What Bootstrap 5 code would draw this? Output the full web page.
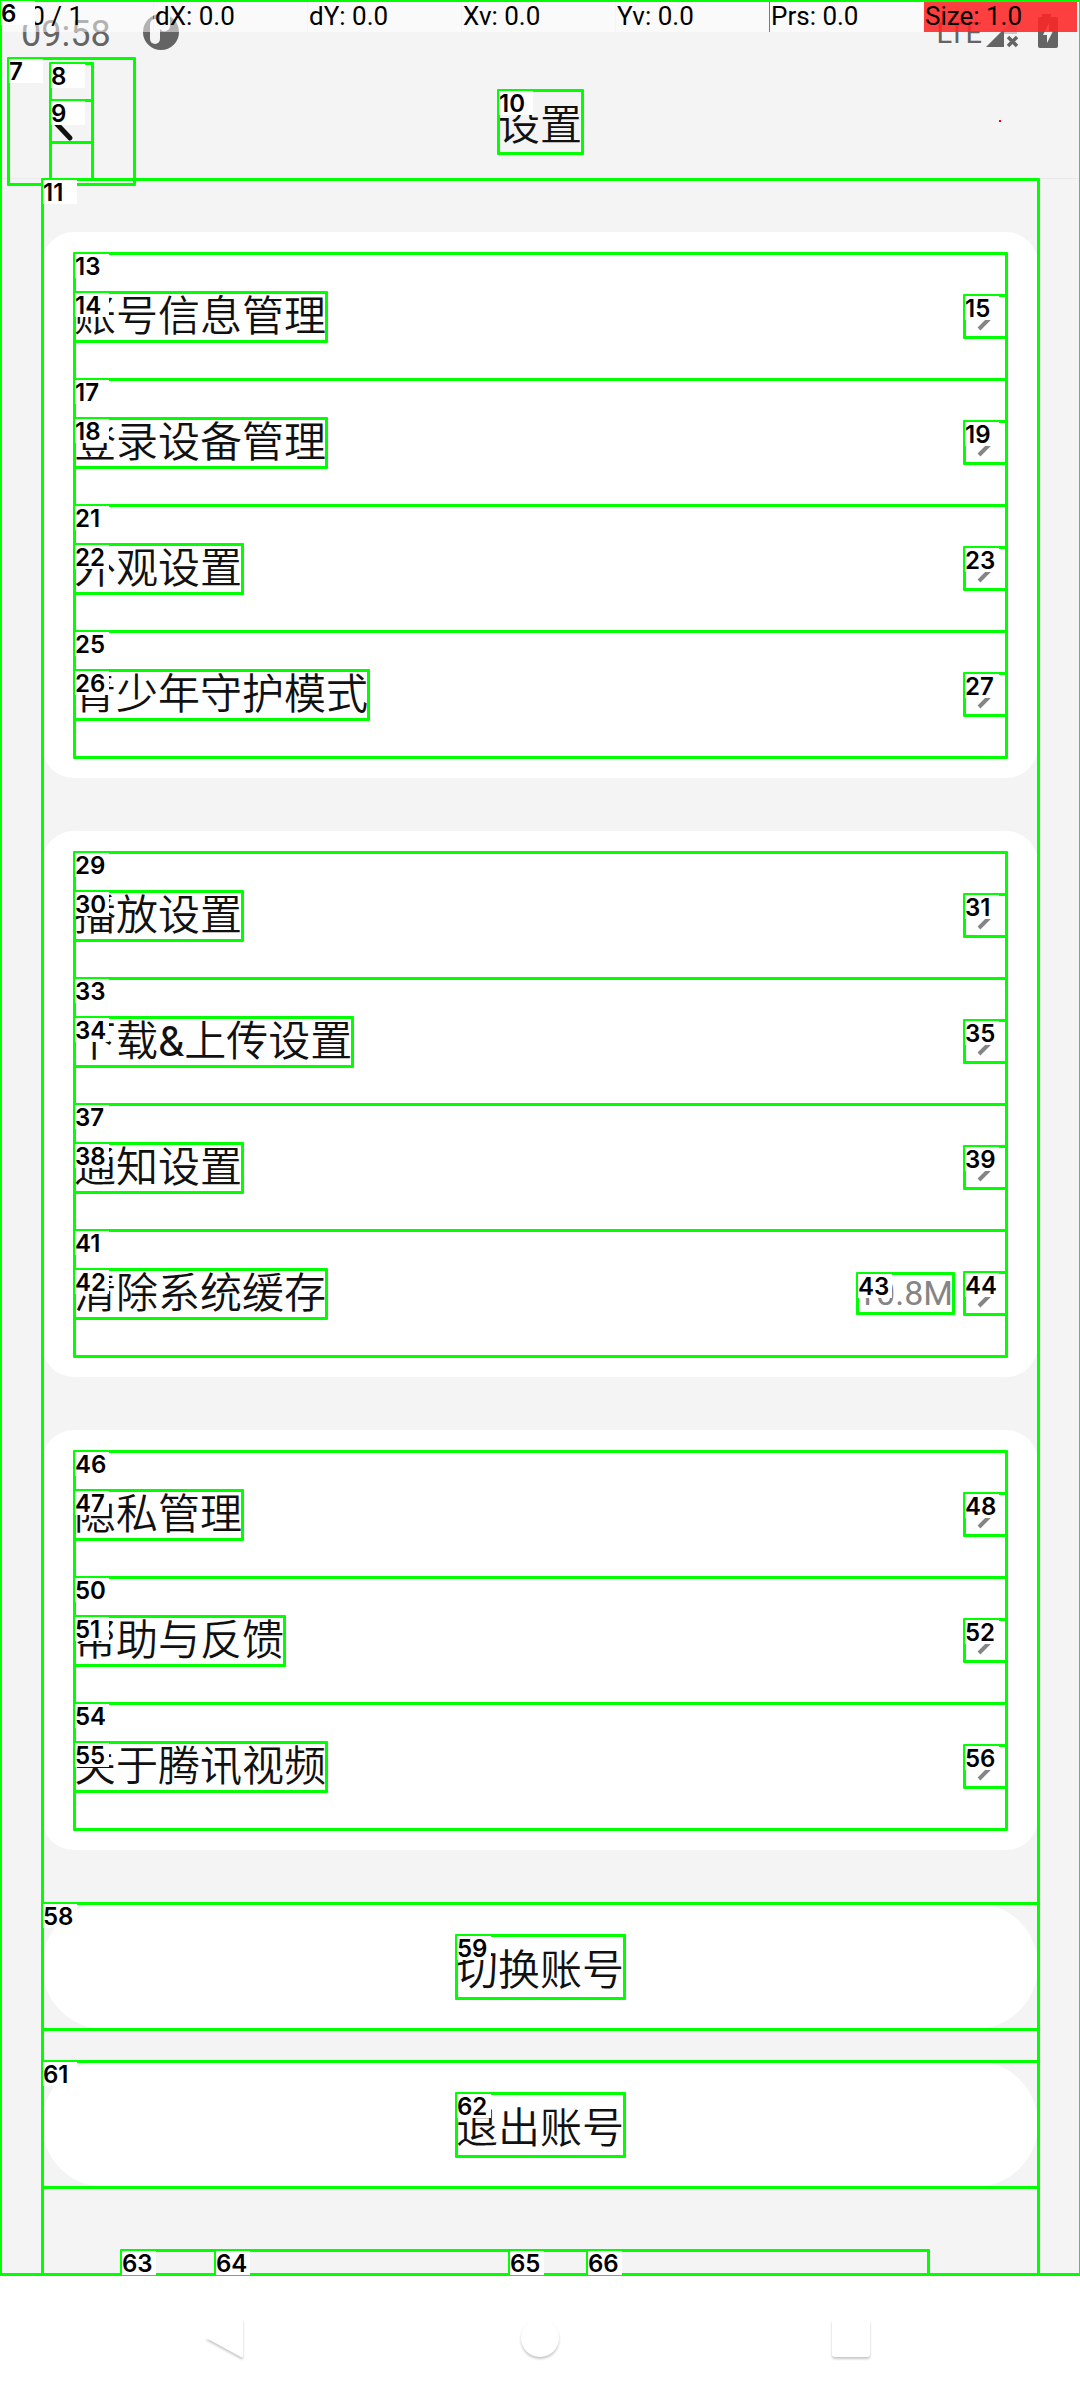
<!DOCTYPE html>
<html lang="zh-CN">
<head>
<meta charset="utf-8">
<meta name="viewport" content="width=device-width, initial-scale=1">
<title>设置</title>
<link rel="stylesheet" href="https://cdn.jsdelivr.net/npm/bootstrap@5.3.0/dist/css/bootstrap.min.css">
<style>
  body { background: #fff; color: #111; font-family: Roboto, "Noto Sans CJK SC", sans-serif; font-size: 42px; line-height: 49px; overflow-x: hidden; }
  a, a:hover { color: inherit; text-decoration: none; }
  svg { display: block; flex: none; }

  /* inspector outline and its index label */
  .node { position: relative; }
  .node::before { content: ""; position: absolute; inset: -1px -2px -2px -1px; border: 3px solid #0f0; border-radius: 1px; pointer-events: none; }
  .tag { position: absolute; left: 1px; top: 1px; z-index: 2; width: 34px; height: 24px; background: #fff; color: #000; font: 600 24px/25px Inter, sans-serif; text-align: left; }

  .screen { background: #f4f4f4; overflow: hidden; padding-bottom: 2px; }
  .screen > .frame { position: absolute; inset: 0 0 2px 0; z-index: 1; pointer-events: none; }
  .status { height: 58px; padding: 0 20px 0 21px; color: #646464; }
  .clock { font-size: 36px; line-height: 68px; }
  .net { font-size: 29px; line-height: 66px; margin-right: 2px; }
  .pointer { position: absolute; inset: 0 0 auto 0; display: grid; grid-template-columns: repeat(7, 1fr); gap: 1px; padding-right: 3px; color: #000; font-size: 26px; line-height: 33px; white-space: pre; }
  .pointer > span { background: rgba(255,255,255,.5); padding-left: 1px; height: 32px; }
  .pointer > .edge { box-shadow: -1px 0 #ff4040; }
  .pointer > .hot { background: linear-gradient(rgba(255,0,0,.75), rgba(255,0,0,.75)), rgba(255,255,255,.5); }
  .touch { position: absolute; left: 999px; top: 120px; width: 2px; height: 2px; background: #f00; }

  .toolbar { height: 121px; padding: 6px 8px 0; border-bottom: 1px solid #e9e9e9; }
  .back { width: 126px; height: 126px; padding: 0 0 0 42px; border: 0; background: none; }
  .back-in { width: 42px; height: 116px; }
  .heading { font-size: 42px; line-height: 55px; padding-top: 8px; margin: 0; font-weight: 400; }
  .side { flex: 1 1 0; }

  .content-area { margin: 0 42px; padding-top: 53px; }
  .panel { background: #fff; border-radius: 32px; padding: 21px 32px; margin-bottom: 53px; }
  .item { height: 126px; }
  .item, .heading, .pill { font-weight: 350; }
  .size { font-size: 34px; line-height: 40px; color: #858585; font-weight: 400; margin-right: 11px; }
  .pill { height: 126px; border: 0; border-radius: 63px; background: #fff; color: #111; margin-bottom: 32px; padding: 0; }
  .pill-text { line-height: 55px; padding-top: 8px; }
  .legal { height: 24px; margin: 63px 110px 0 79px; }
  .w-a { flex: 94; } .w-b { flex: 294; } .w-c { flex: 78; } .w-d { flex: 341; }
  .navkeys { height: 124px; gap: 272px; }
  .navkeys button { border: 0; padding: 0; background: none; }
  .navkeys svg { overflow: visible; filter: drop-shadow(0 2px 1px rgba(0,0,0,.22)); }
</style>
<script src="https://cdn.jsdelivr.net/npm/bootstrap@5.3.0/dist/js/bootstrap.bundle.min.js"></script>
</head>
<body>
<svg width="0" height="0" class="position-absolute" aria-hidden="true">
  <symbol id="go" viewBox="0 0 42 42"><path d="M15 34L28 21L15 8" fill="none" stroke="#858585" stroke-width="4"/></symbol>
</svg>

<div class="screen position-relative">
  <div class="node frame"><span class="tag">6</span></div>

  <header>
    <div class="status d-flex align-items-start">
      <span class="clock">09:58</span>
      <svg class="ms-4" width="50" height="58" viewBox="0 0 50 58" aria-hidden="true"><circle cx="26" cy="32" r="18" fill="#646464"/><rect x="15" y="19" width="10" height="25" rx="5" fill="#f4f4f4"/><path d="M25 14h10v12a5.500 5.500 0 0 1-10 3z" fill="#f4f4f4"/></svg>
      <span class="net ms-auto">LTE</span>
      <svg width="76" height="58" viewBox="0 0 76 58" aria-hidden="true"><path d="M2 47L20 29V47z" fill="#646464"/><path d="M20 29L33 16V34H20z" fill="#646464" opacity=".3"/><path d="M24 37l9 9M33 37l-9 9" stroke="#646464" stroke-width="3.500"/><path d="M58 14h9v3h5a2 2 0 0 1 2 2v27a2 2 0 0 1-2 2H56a2 2 0 0 1-2-2V19a2 2 0 0 1 2-2h2z" fill="#646464"/><path d="M65 23L59 35h4v8l6-12h-4z" fill="#f4f4f4"/></svg>
    </div>
    <div class="pointer"><span>P: 0 / 1</span><span>dX: 0.0</span><span>dY: 0.0</span><span>Xv: 0.0</span><span>Yv: 0.0</span><span class="edge">Prs: 0.0</span><span class="hot">Size: 1.0</span></div>
    <div class="touch"></div>

    <div class="toolbar d-flex align-items-center">
      <div class="side d-flex align-items-center">
        <button class="back node d-flex align-items-center" type="button" aria-label="返回"><span class="tag">7</span>
          <span class="back-in node d-flex align-items-center"><span class="tag">8</span>
            <span class="node d-block"><span class="tag">9</span><svg width="42" height="42" viewBox="0 0 42 42"><path d="M20 38L4 21L20 4" fill="none" stroke="#111" stroke-width="5" stroke-linecap="round" stroke-linejoin="round"/></svg></span>
          </span>
        </button>
      </div>
      <h1 class="heading node"><span class="tag">10</span>设置</h1>
      <div class="side"></div>
    </div>
  </header>

  <main class="content-area node"><span class="tag">11</span>
    <nav class="panel">
      <a href="#" class="item node d-flex align-items-center justify-content-between"><span class="tag">13</span><span class="node"><span class="tag">14</span>账号信息管理</span><span class="node"><span class="tag">15</span><svg width="42" height="42"><use href="#go"/></svg></span></a>
      <a href="#" class="item node d-flex align-items-center justify-content-between"><span class="tag">17</span><span class="node"><span class="tag">18</span>登录设备管理</span><span class="node"><span class="tag">19</span><svg width="42" height="42"><use href="#go"/></svg></span></a>
      <a href="#" class="item node d-flex align-items-center justify-content-between"><span class="tag">21</span><span class="node"><span class="tag">22</span>外观设置</span><span class="node"><span class="tag">23</span><svg width="42" height="42"><use href="#go"/></svg></span></a>
      <a href="#" class="item node d-flex align-items-center justify-content-between"><span class="tag">25</span><span class="node"><span class="tag">26</span>青少年守护模式</span><span class="node"><span class="tag">27</span><svg width="42" height="42"><use href="#go"/></svg></span></a>
    </nav>
    <nav class="panel">
      <a href="#" class="item node d-flex align-items-center justify-content-between"><span class="tag">29</span><span class="node"><span class="tag">30</span>播放设置</span><span class="node"><span class="tag">31</span><svg width="42" height="42"><use href="#go"/></svg></span></a>
      <a href="#" class="item node d-flex align-items-center justify-content-between"><span class="tag">33</span><span class="node"><span class="tag">34</span>下载<span class="fw-normal">&amp;</span>上传设置</span><span class="node"><span class="tag">35</span><svg width="42" height="42"><use href="#go"/></svg></span></a>
      <a href="#" class="item node d-flex align-items-center justify-content-between"><span class="tag">37</span><span class="node"><span class="tag">38</span>通知设置</span><span class="node"><span class="tag">39</span><svg width="42" height="42"><use href="#go"/></svg></span></a>
      <a href="#" class="item node d-flex align-items-center"><span class="tag">41</span><span class="node me-auto"><span class="tag">42</span>清除系统缓存</span><span class="size node"><span class="tag">43</span>10.8M</span><span class="node"><span class="tag">44</span><svg width="42" height="42"><use href="#go"/></svg></span></a>
    </nav>
    <nav class="panel">
      <a href="#" class="item node d-flex align-items-center justify-content-between"><span class="tag">46</span><span class="node"><span class="tag">47</span>隐私管理</span><span class="node"><span class="tag">48</span><svg width="42" height="42"><use href="#go"/></svg></span></a>
      <a href="#" class="item node d-flex align-items-center justify-content-between"><span class="tag">50</span><span class="node"><span class="tag">51</span>帮助与反馈</span><span class="node"><span class="tag">52</span><svg width="42" height="42"><use href="#go"/></svg></span></a>
      <a href="#" class="item node d-flex align-items-center justify-content-between"><span class="tag">54</span><span class="node"><span class="tag">55</span>关于腾讯视频</span><span class="node"><span class="tag">56</span><svg width="42" height="42"><use href="#go"/></svg></span></a>
    </nav>
    <button type="button" class="pill node d-flex w-100 align-items-center justify-content-center"><span class="tag">58</span><span class="node pill-text"><span class="tag">59</span>切换账号</span></button>
    <button type="button" class="pill node d-flex w-100 align-items-center justify-content-center"><span class="tag">61</span><span class="node pill-text"><span class="tag">62</span>退出账号</span></button>
    <div class="legal d-flex">
      <div class="node w-a"><span class="tag">63</span></div><div class="node w-b"><span class="tag">64</span></div><div class="node w-c"><span class="tag">65</span></div><div class="node w-d"><span class="tag">66</span></div>
    </div>
  </main>
</div>

<footer class="navkeys d-flex align-items-center justify-content-center">
  <button type="button" aria-label="返回"><svg width="40" height="40" viewBox="0 0 40 40"><path d="M-2 20L33 1Q35 0 35 2V38Q35 40 33 39z" fill="#fff"/></svg></button>
  <button type="button" aria-label="主屏幕"><svg width="40" height="40" viewBox="0 0 40 40"><circle cx="20" cy="20" r="19" fill="#fff"/></svg></button>
  <button type="button" aria-label="最近任务"><svg width="40" height="40" viewBox="0 0 40 40"><rect y="1" width="38" height="38" rx="3" fill="#fff"/></svg></button>
</footer>
</body>
</html>
